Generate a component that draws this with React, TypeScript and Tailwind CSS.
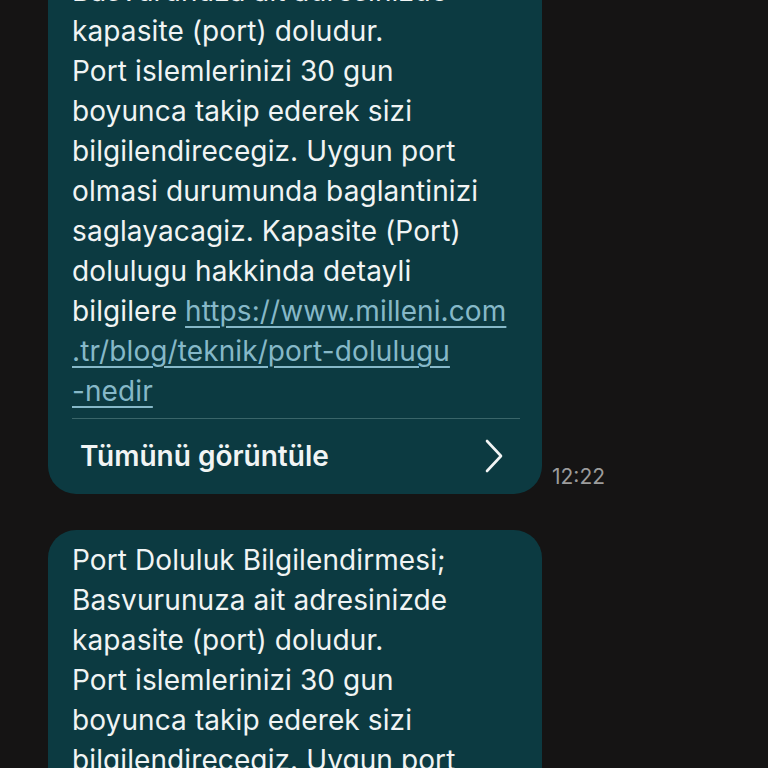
import React from 'react';

const firstLines = [
  'Port Doluluk Bilgilendirmesi;',
  'Basvurunuza ait adresinizde',
  'kapasite (port) doludur.',
  'Port islemlerinizi 30 gun',
  'boyunca takip ederek sizi',
  'bilgilendirecegiz. Uygun port',
  'olmasi durumunda baglantinizi',
  'saglayacagiz. Kapasite (Port)',
  'dolulugu hakkinda detayli',
];

const linkLines = ['https://www.milleni.com', '.tr/blog/teknik/port-dolulugu', '-nedir'];

const Chevron = () => (
  <svg width="20" height="34" viewBox="0 0 20 34" fill="none" stroke="#f2f4f4" strokeWidth="2.6" strokeLinecap="round" strokeLinejoin="round">
    <path d="M3 2 L17 17 L3 32" />
  </svg>
);

const Bubble = ({ children }: { children: React.ReactNode }) => (
  <div className="w-[494px] rounded-[28px] bg-[#0c3a41] text-[#f1f4f4]">{children}</div>
);

export default function App() {
  return (
    <div className="h-[768px] w-[768px] overflow-hidden bg-[#151414]" style={{ fontFamily: 'Inter, "Noto Sans", sans-serif' }}>
      <div className="-mt-[79px] flex flex-col gap-[36px] pl-[48px]">
        {/* first message */}
        <div className="flex items-end gap-[10px]">
          <Bubble>
            <div className="px-[24px] pt-[10px] text-[28px] leading-[40px] tracking-[0.1px]">
              {firstLines.map((l) => (
                <div key={l}>{l}</div>
              ))}
              <div>
                bilgilere{' '}
                <span className="text-[#86b8c8] underline decoration-[1.5px] underline-offset-[5px]">{linkLines[0]}</span>
              </div>
              {linkLines.slice(1).map((l) => (
                <div key={l}>
                  <span className="text-[#86b8c8] underline decoration-[1.5px] underline-offset-[5px]">{l}</span>
                </div>
              ))}
            </div>
            <div className="mx-[24px] mr-[22px] mt-[7px] h-px bg-[#3a6569]" />
            <div className="flex h-[75px] items-center justify-between pl-[32px] pr-[38px] pb-[2px]">
              <span className="text-[28px] font-semibold">Tümünü görüntüle</span>
              <Chevron />
            </div>
          </Bubble>
          <span className="mb-[2px] text-[21px] text-[#9c9c9c]">12:22</span>
        </div>

        {/* second message */}
        <Bubble>
          <div className="px-[24px] pt-[10px] pb-[20px] text-[28px] leading-[40px] tracking-[0.1px]">
            {firstLines.map((l) => (
              <div key={l}>{l}</div>
            ))}
          </div>
        </Bubble>
      </div>
    </div>
  );
}
